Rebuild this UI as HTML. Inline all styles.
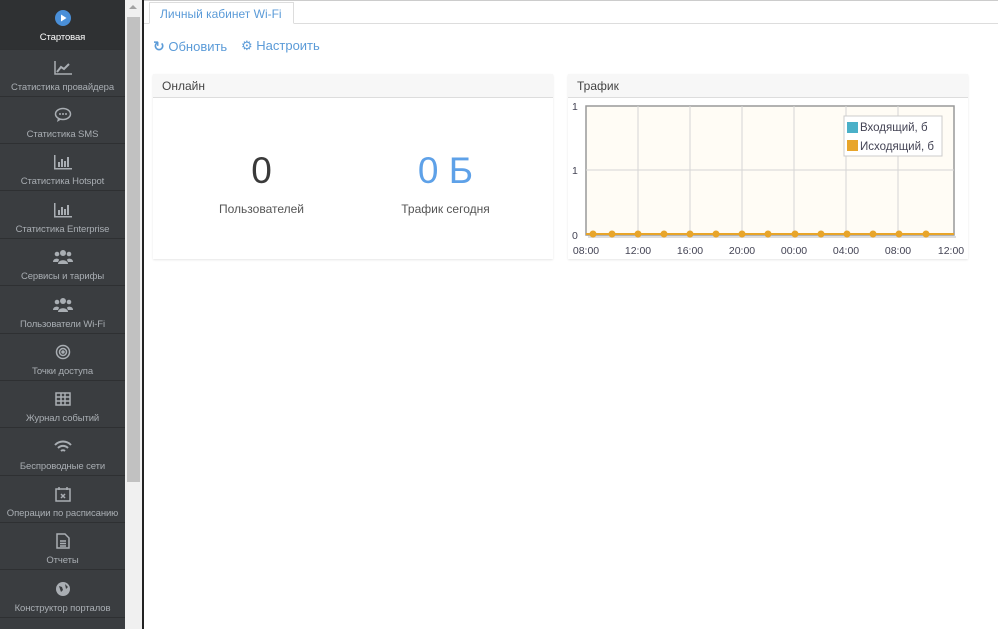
<!DOCTYPE html>
<html><head><meta charset="utf-8"><style>
*{margin:0;padding:0;box-sizing:border-box}
body{width:998px;height:629px;overflow:hidden;background:#fff;font-family:"Liberation Sans","DejaVu Sans",sans-serif;position:relative}
#sb{position:absolute;left:0;top:0;width:125px;height:629px;background:#3a3d40}
.it{position:absolute;left:0;width:125px;height:47px;border-bottom:1px solid #2e3032;text-align:center;color:#a9aeb3;font-size:9.5px;letter-spacing:-0.1px}
.it .ic{position:absolute;left:0;right:0;top:9px;height:18px;display:flex;justify-content:center;align-items:center}
.it .lb{position:absolute;left:0;right:0;top:32px;white-space:nowrap}
.it.act{background:#2f3133;color:#fff}
#scr{position:absolute;left:125px;top:0;width:17px;height:629px;background:#f0f0f0}
#thumb{position:absolute;left:127px;top:17px;width:13px;height:465px;background:#c1c1c1}
#vl{position:absolute;left:142px;top:0;width:2px;height:629px;background:#222}
.tabbar{position:absolute;left:144px;top:23px;width:854px;border-bottom:1px solid #ddd}
.tab{position:absolute;left:149px;top:2px;width:145px;height:22px;border:1px solid #ddd;border-bottom:1px solid #fff;background:#fff;color:#5b9bd8;font-size:12px;padding:4px 0 0 10px}
.act2{position:absolute;top:38px;font-size:13px;color:#5b9bd8}
.panel{position:absolute;background:#fff;box-shadow:0 1px 2px rgba(0,0,0,.1)}
.ph{height:24px;background:#f7f7f7;border-bottom:1px solid #ddd;font-size:12px;color:#444;padding:5px 0 0 9px}
</style></head><body>
<div id="sb">
<div class="it act" style="top:0;height:50px"><div class="ic" style="top:9px"><svg width="16" height="16"><circle cx="8" cy="8" r="8" fill="#4a8fd8"/><path d="M6 4.5L11.5 8L6 11.5Z" fill="#fff"/></svg></div><div class="lb" style="top:32px">Стартовая</div></div>
<div class="it" style="top:50px"><div class="ic"><svg width="20" height="16" fill="none" stroke="#a9aeb3" stroke-width="1.5"><path d="M2 1V14H19"/><path d="M4 12L8 7L11 9L16 4" stroke-width="2"/></svg></div><div class="lb">Статистика провайдера</div></div>
<div class="it" style="top:97px"><div class="ic"><svg width="18" height="16"><ellipse cx="9" cy="7" rx="7.5" ry="5.5" fill="none" stroke="#a9aeb3" stroke-width="1.5"/><path d="M4 11L3 15L8 12" fill="#a9aeb3"/><circle cx="6" cy="7" r="1" fill="#a9aeb3"/><circle cx="9" cy="7" r="1" fill="#a9aeb3"/><circle cx="12" cy="7" r="1" fill="#a9aeb3"/></svg></div><div class="lb">Статистика SMS</div></div>
<div class="it" style="top:144px"><div class="ic"><svg width="20" height="16" fill="#a9aeb3"><path d="M1 1h1.5v13H19v1.5H1z"/><rect x="5" y="8" width="2" height="5"/><rect x="8" y="5" width="2" height="8"/><rect x="11" y="7" width="2" height="6"/><rect x="14" y="3" width="2" height="10"/></svg></div><div class="lb">Статистика Hotspot</div></div>
<div class="it" style="top:192px"><div class="ic"><svg width="20" height="16" fill="#a9aeb3"><path d="M1 1h1.5v13H19v1.5H1z"/><rect x="5" y="8" width="2" height="5"/><rect x="8" y="5" width="2" height="8"/><rect x="11" y="7" width="2" height="6"/><rect x="14" y="3" width="2" height="10"/></svg></div><div class="lb">Статистика Enterprise</div></div>
<div class="it" style="top:239px"><div class="ic"><svg width="20" height="16" fill="#a9aeb3"><circle cx="10" cy="4" r="3"/><circle cx="4" cy="5" r="2.3"/><circle cx="16" cy="5" r="2.3"/><path d="M5 15c0-5 10-5 10 0z"/><path d="M0 13c0-4 6-4 6-2l-1 2z"/><path d="M20 13c0-4-6-4-6-2l1 2z"/></svg></div><div class="lb">Сервисы и тарифы</div></div>
<div class="it" style="top:287px"><div class="ic"><svg width="20" height="16" fill="#a9aeb3"><circle cx="10" cy="4" r="3"/><circle cx="4" cy="5" r="2.3"/><circle cx="16" cy="5" r="2.3"/><path d="M5 15c0-5 10-5 10 0z"/><path d="M0 13c0-4 6-4 6-2l-1 2z"/><path d="M20 13c0-4-6-4-6-2l1 2z"/></svg></div><div class="lb">Пользователи Wi-Fi</div></div>
<div class="it" style="top:334px"><div class="ic"><svg width="16" height="16" fill="none" stroke="#a9aeb3" stroke-width="1.5"><circle cx="8" cy="8" r="6.5"/><circle cx="8" cy="8" r="3.5"/><circle cx="8" cy="8" r="1" fill="#a9aeb3"/></svg></div><div class="lb">Точки доступа</div></div>
<div class="it" style="top:381px"><div class="ic"><svg width="16" height="14" fill="none" stroke="#a9aeb3" stroke-width="1.5"><rect x="1" y="1" width="14" height="12"/><path d="M1 5H15M1 9H15M6 1V13M10 1V13"/></svg></div><div class="lb">Журнал событий</div></div>
<div class="it" style="top:429px"><div class="ic"><svg width="18" height="14" fill="none" stroke="#a9aeb3" stroke-width="2"><path d="M1 5a11 11 0 0 1 16 0M4 8a7 7 0 0 1 10 0M7 11a3 3 0 0 1 4 0"/></svg></div><div class="lb">Беспроводные сети</div></div>
<div class="it" style="top:476px"><div class="ic"><svg width="16" height="16" fill="none" stroke="#a9aeb3" stroke-width="1.5"><rect x="1" y="3" width="14" height="12"/><path d="M4 1V4M12 1V4M6 8L10 12M10 8L6 12"/></svg></div><div class="lb">Операции по расписанию</div></div>
<div class="it" style="top:523px"><div class="ic"><svg width="14" height="16" fill="none" stroke="#a9aeb3" stroke-width="1.5"><path d="M1 1H9L13 5V15H1Z"/><path d="M4 8H10M4 10.5H10M4 13H10"/></svg></div><div class="lb">Отчеты</div></div>
<div class="it" style="top:571px"><div class="ic"><svg width="16" height="16"><circle cx="8" cy="8" r="7" fill="#a9aeb3"/><path d="M4 5l3 1 1 3-2 2zM10 3l3 3-2 2z" fill="#3a3d40"/></svg></div><div class="lb">Конструктор порталов</div></div>
</div>
<div id="scr"></div><div id="thumb"></div>
<div style="position:absolute;left:129px;top:5px;width:0;height:0;border-left:4px solid transparent;border-right:4px solid transparent;border-bottom:4px solid #a3a3a3"></div>
<div id="vl"></div>
<div style="position:absolute;left:144px;top:0;width:854px;height:1px;background:#ccc"></div>
<div class="tabbar"></div>
<div class="tab">Личный кабинет Wi-Fi</div>
<div class="act2" style="left:153px"><span style="font-weight:bold;font-size:14px">&#x21bb;</span> Обновить</div>
<div class="act2" style="left:241px"><span style="font-size:13px;font-weight:bold">&#x2699;</span> Настроить</div>
<div class="panel" style="left:153px;top:74px;width:400px;height:185px"><div class="ph">Онлайн</div>
<div style="position:absolute;left:0;width:217px;top:78px;text-align:center;font-size:37px;color:#3a3a3a;line-height:1">0</div>
<div style="position:absolute;left:0;width:217px;top:128px;text-align:center;font-size:12px;color:#555">Пользователей</div>
<div style="position:absolute;left:200px;width:185px;top:78px;text-align:center;font-size:37px;color:#5ea1e8;line-height:1">0 Б</div>
<div style="position:absolute;left:200px;width:185px;top:128px;text-align:center;font-size:12px;color:#555">Трафик сегодня</div>
</div>
<div class="panel" style="left:568px;top:74px;width:400px;height:185px"><div class="ph">Трафик</div></div>
<svg style="position:absolute;left:560px;top:95px" width="420" height="165" font-family="Liberation Sans, sans-serif" font-size="10.5" fill="#445">
<rect x="26" y="11" width="368" height="129" fill="#fffcf5" stroke="#999" stroke-width="1.5"/>
<rect x="28" y="141" width="368" height="2" fill="#ddd"/>
<g stroke="#d5d5d5"><path d="M78 11V140M130 11V140M182 11V140M234 11V140M286 11V140M338 11V140M26 75H394"/></g>
<line x1="26" y1="139" x2="394" y2="139" stroke="#e8a52a" stroke-width="2"/>
<g fill="#e8a52a"><circle cx="33" cy="139" r="3.5"/><circle cx="52" cy="139" r="3.5"/><circle cx="78" cy="139" r="3.5"/><circle cx="104" cy="139" r="3.5"/><circle cx="130" cy="139" r="3.5"/><circle cx="156" cy="139" r="3.5"/><circle cx="182" cy="139" r="3.5"/><circle cx="208" cy="139" r="3.5"/><circle cx="235" cy="139" r="3.5"/><circle cx="261" cy="139" r="3.5"/><circle cx="287" cy="139" r="3.5"/><circle cx="313" cy="139" r="3.5"/><circle cx="339" cy="139" r="3.5"/><circle cx="366" cy="139" r="3.5"/></g>
<text x="12" y="15">1</text><text x="12" y="79">1</text><text x="12" y="144">0</text>
<g text-anchor="middle"><text x="26" y="159">08:00</text><text x="78" y="159">12:00</text><text x="130" y="159">16:00</text><text x="182" y="159">20:00</text><text x="234" y="159">00:00</text><text x="286" y="159">04:00</text><text x="338" y="159">08:00</text><text x="391" y="159">12:00</text></g>
<rect x="284" y="21" width="98" height="40" fill="#fff" stroke="#ccc"/>
<rect x="287" y="27" width="11" height="11" fill="#4ab0c8"/><rect x="287" y="45" width="11" height="11" fill="#e8a52a"/>
<text x="300" y="36" font-size="11.5">Входящий, б</text><text x="300" y="55" font-size="11.5">Исходящий, б</text>
</svg>
</body></html>
